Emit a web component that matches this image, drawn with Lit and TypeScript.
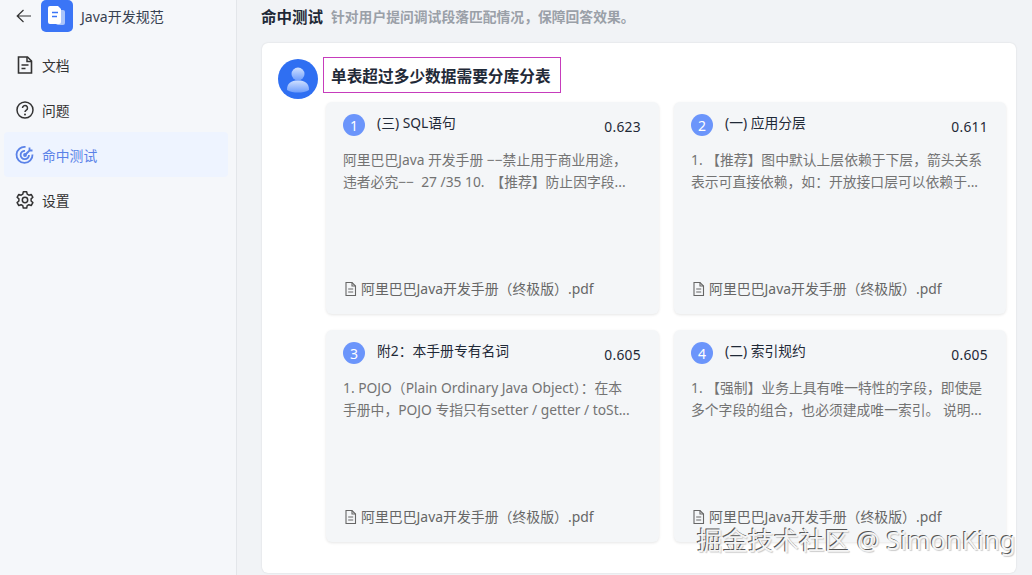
import { LitElement, html, css, svg } from "lit";
import { customElement } from "lit/decorators.js";

const hits = [
  { n: 1, t: "(三) SQL语句", s: "0.623", l1: "阿里巴巴Java 开发手册 −−禁止用于商业用途，", l2: "违者必究−−\u00a0 27 /35 10. \u2009【推荐】防止因字段..." },
  { n: 2, t: "(一) 应用分层", s: "0.611", l1: "1. 【推荐】图中默认上层依赖于下层，箭头关系", l2: "表示可直接依赖，如：开放接口层可以依赖于..." },
  { n: 3, t: "附2：本手册专有名词", s: "0.605", l1: "1. POJO（Plain Ordinary Java Object）：在本", l2: "手册中，POJO 专指只有setter / getter / toSt..." },
  { n: 4, t: "(二) 索引规约", s: "0.605", l1: "1. 【强制】业务上具有唯一特性的字段，即使是", l2: "多个字段的组合，也必须建成唯一索引。 说明..." },
];

const fileIcon = svg`<path d="M3 1.500h6l3.500 3.500v9.500H3z" fill="none" stroke="currentColor" stroke-width="1.100"/><path d="M9 1.500V5h3.500M5.200 8h5M5.200 11h5" fill="none" stroke="currentColor" stroke-width="1.100"/>`;

@customElement("app-root")
export class AppRoot extends LitElement {
  static styles = css`
    :host { display: block; width: 1032px; height: 575px; overflow: hidden; position: relative; background: #f1f3f6;
      font-family: "Noto Sans", "Noto Sans CJK SC", sans-serif; color: #1f2937; }
    .page { display: grid; grid-template-columns: 237px 1fr; height: 575px; }
    .side { background: #f5f7fa; border-right: 1px solid #e3e6ea; padding: 0 8px 0 4px; display: flex; flex-direction: column; }
    .head { display: flex; align-items: center; height: 32px; padding-left: 12px; font-size: 14px; color: #374151; }
    .head .back { width: 15px; height: 14px; margin-right: 10px; flex: none; }
    .logo { width: 32px; height: 32px; flex: none; margin-right: 8px; }
    .menu { display: flex; flex-direction: column; margin-top: 10px; }
    .item { display: flex; align-items: center; height: 45px; padding-left: 11px; gap: 7px; font-size: 13.800px; color: #333; border-radius: 4px; }
    .item svg { width: 20px; height: 20px; flex: none; }
    .item.on { background: #eef4ff; color: #5a82e8; }
    .main { padding: 0 16px 0 24px; display: flex; flex-direction: column; }
    .title { height: 32px; display: flex; align-items: center; gap: 8px; }
    .title b { font-size: 15.500px; color: #1f2937; font-weight: 700; }
    .title span { font-size: 13.800px; font-weight: 600; color: #9aa0a8; }
    .card { margin: 11px 0 0 1px; height: 530px; box-sizing: border-box; background: #fff; border-radius: 6px;
      box-shadow: 0 0 2px rgba(0,0,0,.12); padding: 14px 10px 0 16px; display: grid; grid-template-columns: 40px 1fr; grid-template-rows: 42px 1fr; column-gap: 5px; }
    .avatar { width: 40px; height: 40px; margin-top: 2px; }
    .q { justify-self: start; box-sizing: border-box; height: 36px; width: 238px; border: 1px solid #c63cbc; padding-left: 7px;
      display: flex; align-items: center; font-size: 15.700px; font-weight: 700; color: #1f2937; white-space: nowrap; }
    .grid { grid-column: 2; display: grid; grid-template-columns: 333px 332px; grid-auto-rows: 212px; gap: 16px 15px; margin: 3px 0 0 3px; align-content: start; }
    .hit { box-sizing: border-box; background: #f4f6f8; border-radius: 6px; box-shadow: 0 1px 3px rgba(0,0,0,.1);
      padding: 12px 18px 14px 17px; display: flex; flex-direction: column; }
    .top { display: flex; align-items: flex-start; height: 34px; }
    .num { width: 22px; height: 22px; border-radius: 50%; background: #6b95fb; color: #fff; font-size: 14px; display: flex; align-items: center; justify-content: center; flex: none; margin-right: 12px; }
    .name { font-size: 13.800px; color: #1f2937; flex: 1; line-height: 18px; }
    .score { font-size: 13.800px; color: #1f2937; margin-top: 4px; line-height: 18px; letter-spacing: .3px; }
    .desc { font-size: 13.800px; line-height: 22px; color: #737373; white-space: nowrap; margin-top: 1px; flex: 1; }
    .foot { display: flex; align-items: center; gap: 3px; font-size: 13.900px; color: #666; height: 20px; margin-bottom: 2px; white-space: nowrap; }
    .foot svg { width: 15px; height: 15px; flex: none; }
    .mark { position: absolute; left: 697px; top: 521px; font-size: 25.500px; line-height: 38px; color: #f4f4f4; white-space: nowrap;
      text-shadow: -1px -1px 0 #555, 1px 1px 1px #ccc; }
  `;

  render() {
    return html`
      <div class="page">
        <aside class="side">
          <div class="head">
            <svg class="back" viewBox="0 0 15 14"><path d="M15 7H1.500M7.500 1 1.200 7l6.300 6" fill="none" stroke="#333" stroke-width="1.200"/></svg>
            <svg class="logo" viewBox="0 0 32 32">
              <rect width="32" height="32" rx="5" fill="#3b75f6"/>
              <rect x="15" y="10" width="9" height="15" rx="2" fill="#a9c4fb"/>
              <path d="M9 6h8l3 3v13a2 2 0 0 1-2 2H9a2 2 0 0 1-2-2V8a2 2 0 0 1 2-2z" fill="#fff"/>
              <path d="M11 12.500h6M11 16.500h5" stroke="#3b75f6" stroke-width="1.300"/>
            </svg>
            <span>Java开发规范</span>
          </div>
          <nav class="menu">
            <div class="item">
              <svg viewBox="0 0 20 20"><path d="M3.500 2h9l4 4v12h-13z" fill="none" stroke="#333" stroke-width="1.600"/><path d="M12 2v4.500h4.500M6.500 10h7M6.500 13.500h4" fill="none" stroke="#333" stroke-width="1.500"/></svg>
              文档
            </div>
            <div class="item">
              <svg viewBox="0 0 20 20"><circle cx="10" cy="10" r="8" fill="none" stroke="#333" stroke-width="1.500"/><path d="M7.500 8a2.500 2.500 0 1 1 3.800 2.100c-.9.600-1.300 1-1.300 2" fill="none" stroke="#333" stroke-width="1.500"/><circle cx="10" cy="14.500" r="1" fill="#333"/></svg>
              问题
            </div>
            <div class="item on">
              <svg viewBox="0 0 20 20" fill="none" stroke="#5a82e8" stroke-width="1.800"><path d="M17.500 9.500A8 8 0 1 1 10.500 2"/><path d="M14 10a4.200 4.200 0 1 1-4-4.200"/><circle cx="10" cy="10" r="1" fill="#5a82e8"/><path d="M10 10l5-5M14.500 2.500v3h3"/></svg>
              命中测试
            </div>
            <div class="item">
              <svg viewBox="0 0 20 20" fill="none" stroke="#333" stroke-width="1.500"><path d="M8.300 1.800h3.400l.5 2.400 1.700 1 2.300-.8 1.700 2.900-1.800 1.600v2.100l1.800 1.600-1.700 2.900-2.300-.8-1.700 1-.5 2.400H8.300l-.5-2.400-1.700-1-2.300.8-1.700-2.900 1.800-1.600V8.900L2.100 7.300l1.700-2.900 2.300.8 1.700-1z" stroke-linejoin="round"/><circle cx="10" cy="10" r="2.700"/></svg>
              设置
            </div>
          </nav>
        </aside>
        <main class="main">
          <div class="title"><b>命中测试</b><span>针对用户提问调试段落匹配情况，保障回答效果。</span></div>
          <section class="card">
            <svg class="avatar" viewBox="0 0 40 40">
              <defs><linearGradient id="b" x1="0" y1="0" x2="0" y2="1"><stop offset="0" stop-color="#cfe0ff"/><stop offset="1" stop-color="#6e9dfc"/></linearGradient></defs>
              <circle cx="20" cy="20" r="20" fill="#2f6ff2"/>
              <circle cx="20" cy="15" r="6.500" fill="url(#b)"/>
              <path d="M9 31c0-7 4-9.500 11-9.500s11 2.500 11 9.500c-3 2-7 2.500-11 2.500S12 33 9 31z" fill="url(#b)"/>
            </svg>
            <div class="q">单表超过多少数据需要分库分表</div>
            <div class="grid">
              ${hits.map(h => html`
                <article class="hit">
                  <div class="top"><span class="num">${h.n}</span><span class="name">${h.t}</span><span class="score">${h.s}</span></div>
                  <div class="desc"><div>${h.l1}</div><div>${h.l2}</div></div>
                  <div class="foot"><svg viewBox="0 0 15 15">${fileIcon}</svg>阿里巴巴Java开发手册（终极版）.pdf</div>
                </article>`)}
            </div>
          </section>
        </main>
      </div>
      <div class="mark">掘金技术社区 @ SimonKing</div>
    `;
  }
}
